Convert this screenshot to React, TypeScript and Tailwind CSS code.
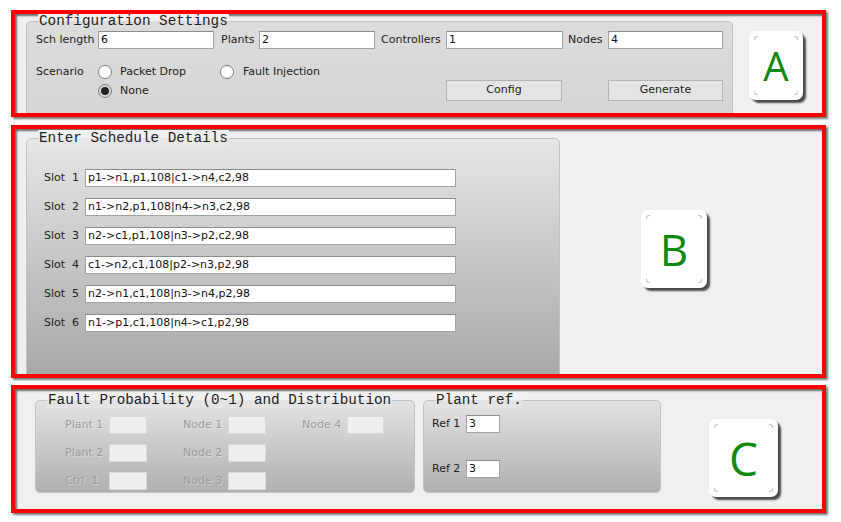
const ui = "font-['DejaVu_Sans',sans-serif] text-[11px]";
const mono = "font-['Liberation_Mono',monospace] text-[14.3px]";

function Red({ h, children }: { h: string; children: React.ReactNode }) {
  return (
    <div
      className={`${h} w-[815px] border-4 border-[#ff0000] bg-[#f0f0f0] shadow-[2px_2px_2px_rgba(0,0,0,0.55),inset_2px_2px_2px_rgba(0,0,0,0.55)] overflow-hidden`}
    >
      <div className="flex h-full w-full">{children}</div>
    </div>
  );
}

function Group({
  title,
  cls,
  top,
  children,
}: {
  title: string;
  cls: string;
  top: string;
  children: React.ReactNode;
}) {
  return (
    <div className={`relative shrink-0 rounded-[5px] border border-[#c2c2c2] ${cls}`}>
      <span
        className={`absolute -top-[9px] left-[11px] px-[1px] leading-[16px] text-[#1e1e1e] ${mono}`}
        style={{ background: `linear-gradient(to bottom,#f0f0f0 50%,${top} 50%)` }}
      >
        {title}
      </span>
      {children}
    </div>
  );
}

function Field({ w, value = "", off = false }: { w: string; value?: string; off?: boolean }) {
  return (
    <div
      className={`${w} h-[18px] shrink-0 border pl-[2px] leading-[16px] ${ui} ${
        off ? "bg-[#efefef] border-[#d9d9d9]" : "bg-white border-[#a3a3a3] border-t-[#8c8c8c] text-[#111]"
      }`}
    >
      {value}
    </div>
  );
}

function Radio({ on = false }: { on?: boolean }) {
  return (
    <div
      className={`w-[14px] h-[14px] shrink-0 rounded-full border border-[#7d7d7d] flex items-center justify-center ${
        on ? "bg-[#d6d6d6]" : "bg-white"
      }`}
    >
      {on && <div className="w-[8px] h-[8px] rounded-full bg-[#222]" />}
    </div>
  );
}

function Letter({ ch, cls, size }: { ch: string; cls: string; size: string }) {
  const tick = "absolute w-[4px] h-[4px] border-[#c4c4c4]";
  return (
    <div
      className={`relative shrink-0 rounded-[7px] bg-white shadow-[3px_3px_2px_rgba(0,0,0,0.7)] flex items-center justify-center ${cls}`}
    >
      <span className={`absolute top-[5px] left-[5px] border-t border-l rounded-tl-[3px] ${tick}`} />
      <span className={`absolute top-[5px] right-[5px] border-t border-r rounded-tr-[3px] ${tick}`} />
      <span className={`absolute bottom-[5px] left-[5px] border-b border-l rounded-bl-[3px] ${tick}`} />
      <span className={`absolute bottom-[5px] right-[5px] border-b border-r rounded-br-[3px] ${tick}`} />
      <span className={`font-['Open_Sans',sans-serif] text-[#0f8a0f] leading-none ${size}`}>{ch}</span>
    </div>
  );
}

const slots = [
  "p1->n1,p1,108|c1->n4,c2,98",
  "n1->n2,p1,108|n4->n3,c2,98",
  "n2->c1,p1,108|n3->p2,c2,98",
  "c1->n2,c1,108|p2->n3,p2,98",
  "n2->n1,c1,108|n3->n4,p2,98",
  "n1->p1,c1,108|n4->c1,p2,98",
];

export default function App() {
  const lbl = `${ui} text-[#222] shrink-0`;
  const dis = `${ui} text-[#9c9c9c] shrink-0 [text-shadow:1px_1px_0_rgba(255,255,255,0.35)]`;
  return (
    <div className="w-[841px] h-[522px] bg-white pl-[11px] pt-[10px] flex flex-col">
      {/* A */}
      <Red h="h-[107px]">
        <div className="ml-[11px] mt-[7px]">
          <Group title="Configuration Settings" cls="w-[707px] h-[96px] bg-[linear-gradient(to_bottom,#dcdcdc,#d5d5d5)]" top="#dcdcdc">
            <div className="pl-[9px] pt-[9px]">
              <div className="flex items-center h-[18px]">
                <span className={`${lbl} w-[62px]`}>Sch length</span>
                <Field w="w-[116px]" value="6" />
                <span className={`${lbl} w-[38px] ml-[7px]`}>Plants</span>
                <Field w="w-[116px]" value="2" />
                <span className={`${lbl} w-[65px] ml-[6px]`}>Controllers</span>
                <Field w="w-[117px]" value="1" />
                <span className={`${lbl} w-[40px] ml-[5px]`}>Nodes</span>
                <Field w="w-[115px]" value="4" />
              </div>
              <div className="flex items-start mt-[16px]">
                <div className="w-[410px] flex shrink-0">
                  <span className={`${lbl} w-[62px] leading-[14px]`}>Scenario</span>
                  <div className="flex flex-col gap-[5px]">
                    <div className="flex items-center h-[14px]">
                      <div className="w-[122px] flex items-center gap-[8px]">
                        <Radio />
                        <span className={lbl}>Packet Drop</span>
                      </div>
                      <div className="flex items-center gap-[9px]">
                        <Radio />
                        <span className={lbl}>Fault Injection</span>
                      </div>
                    </div>
                    <div className="flex items-center gap-[8px] h-[14px]">
                      <Radio on />
                      <span className={lbl}>None</span>
                    </div>
                  </div>
                </div>
                <button className={`mt-[15px] w-[116px] h-[21px] border border-[#b4b4b4] bg-[#e4e4e4] text-[#222] ${ui}`}>Config</button>
                <button className={`mt-[15px] ml-[46px] w-[115px] h-[21px] border border-[#b4b4b4] bg-[#e4e4e4] text-[#222] ${ui}`}>Generate</button>
              </div>
            </div>
          </Group>
        </div>
        <div className="ml-[16px] mt-[17px]">
          <Letter ch="A" cls="w-[54px] h-[69px]" size="text-[40px]" />
        </div>
      </Red>

      {/* B */}
      <div className="mt-[8px]">
        <Red h="h-[253px]">
          <div className="ml-[11px] mt-[9px]">
            <Group title="Enter Schedule Details" cls="w-[534px] h-[245px] bg-[linear-gradient(to_bottom,#e6e6e6,#a6a6a6)]" top="#e6e6e6">
              <div className="pl-[17px] pt-[30px] flex flex-col gap-[11px]">
                {slots.map((s, i) => (
                  <div key={i} className="flex items-center h-[18px]">
                    <span className={`${lbl} w-[41px] whitespace-pre`}>{`Slot  ${i + 1}`}</span>
                    <Field w="w-[371px]" value={s} />
                  </div>
                ))}
              </div>
            </Group>
          </div>
          <div className="ml-[81px] mt-[81px]">
            <Letter ch="B" cls="w-[66px] h-[78px]" size="text-[44px]" />
          </div>
        </Red>
      </div>

      {/* C */}
      <div className="mt-[7px]">
        <Red h="h-[128px]">
          <div className="ml-[20px] mt-[11px]">
            <Group title="Fault Probability (0~1) and Distribution" cls="w-[380px] h-[93px] bg-[linear-gradient(to_bottom,#e3e3e3,#b0b0b0)]" top="#e3e3e3">
              <div className="pl-[29px] pt-[15px] flex flex-col gap-[10px]">
                {[
                  ["Plant 1", "Node 1", "Node 4"],
                  ["Plant 2", "Node 2", ""],
                  ["Ctrl  1", "Node 3", ""],
                ].map((r, i) => (
                  <div key={i} className="flex items-center h-[18px]">
                    <span className={`${dis} w-[44px] whitespace-pre`}>{r[0]}</span>
                    <Field w="w-[38px]" off />
                    <span className={`${dis} w-[45px] ml-[36px]`}>{r[1]}</span>
                    <Field w="w-[38px]" off />
                    {r[2] && (
                      <>
                        <span className={`${dis} w-[45px] ml-[36px]`}>{r[2]}</span>
                        <Field w="w-[37px]" off />
                      </>
                    )}
                  </div>
                ))}
              </div>
            </Group>
          </div>
          <div className="ml-[8px] mt-[11px]">
            <Group title="Plant ref." cls="w-[238px] h-[93px] bg-[linear-gradient(to_bottom,#e3e3e3,#b0b0b0)]" top="#e3e3e3">
              <div className="pl-[8px] pt-[14px] flex flex-col gap-[27px]">
                <div className="flex items-center h-[18px]">
                  <span className={`${lbl} w-[34px]`}>Ref 1</span>
                  <Field w="w-[34px]" value="3" />
                </div>
                <div className="flex items-center h-[18px]">
                  <span className={`${lbl} w-[34px]`}>Ref 2</span>
                  <Field w="w-[34px]" value="3" />
                </div>
              </div>
            </Group>
          </div>
          <div className="ml-[48px] mt-[30px]">
            <Letter ch="C" cls="w-[69px] h-[78px]" size="text-[46px]" />
          </div>
        </Red>
      </div>
    </div>
  );
}
